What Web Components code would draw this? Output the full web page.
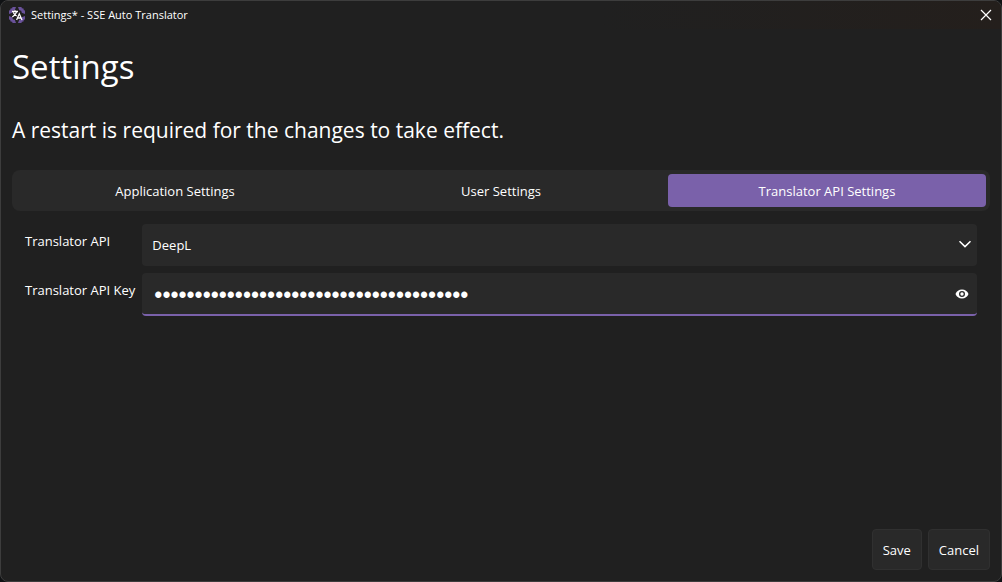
<!DOCTYPE html>
<html lang="en">
<head>
<meta charset="utf-8">
<title>Settings* - SSE Auto Translator</title>
<style>
html, body { height: 100%; }
body { margin: 0; background: #101214; color: #fff; font: 13px/20px "Open Sans", "Noto Sans", sans-serif; }
</style>
</head>
<body>
<settings-window></settings-window>
<script>
const define = (name, html, setup) => customElements.define(name, class extends HTMLElement {
  constructor() {
    super();
    const t = document.createElement('template');
    t.innerHTML = html;
    this.attachShadow({ mode: 'open' }).append(t.content.cloneNode(true));
  }
  connectedCallback() { if (setup) setup(this, this.shadowRoot); }
});

define('title-bar', `
<style>
:host { display: flex; align-items: center; height: 28px; padding: 0 8px; gap: 6px; font-size: 11px; line-height: 16px;
  background: linear-gradient(90deg, #202020 60%, #241f1c); }
.logo { width: 16px; height: 16px; flex: none; }
span { flex: 1; }
button { display: flex; align-items: center; justify-content: center; width: 14px; height: 24px; padding: 0; border: 0; background: none; color: #fff; }
</style>
<svg class="logo" viewBox="0 0 16 16" aria-hidden="true">
  <g fill="#6a529b">
    <path d="M3.500 0H7L5.800 3.200 3.800 3.800 3.200 5.800 0 7V3.500L1.200 3.200 1.500 1.500 3.200 1.200Z"/>
    <path d="M12.500 0H9l1.200 3.200 2 .6.600 2L16 7V3.500l-1.200-.3-.3-1.700-1.700-.3Z"/>
    <path d="M3.500 16H7l-1.200-3.200-2-.6-.6-2L0 9v3.500l1.200.3.300 1.700 1.700.3Z"/>
    <path d="M12.500 16H9l1.200-3.200 2-.6.600-2L16 9v3.500l-1.200.3-.3 1.700-1.700.3Z"/>
  </g>
  <path fill="none" stroke="#fff" stroke-width="1.300" d="M3 4.500h6M6 3.200v1.300M7.700 4.700Q6.800 8 3.300 10M4.300 5.500Q5.500 8 7.700 9M7.600 13l2.700-6.200L13 13M8.600 11h3.500"/>
</svg>
<span><slot></slot></span>
<button type="button" aria-label="Close"><svg width="12" height="12" viewBox="0 0 12 12" fill="none" stroke="currentColor" stroke-width="1.200"><path d="M1 1l10 10M11 1L1 11"/></svg></button>
`);

define('tab-strip', `
<style>
:host { display: grid; grid-auto-flow: column; grid-auto-columns: 1fr; gap: 8px; padding: 4px; background: #292929; border-radius: 8px; }
</style><slot></slot>`, el => el.setAttribute('role', 'tablist'));

define('tab-item', `
<style>
:host { display: grid; }
button { height: 33px; padding: 0; border: 0; border-radius: 4px; background: none; color: inherit; font: inherit; }
:host([selected]) button { background: #7a61aa; }
</style><button type="button" role="tab"><slot></slot></button>`,
(el, root) => root.querySelector('button').setAttribute('aria-selected', el.hasAttribute('selected')));

define('api-form', `
<style>
:host { display: block; }
form { display: grid; grid-template-columns: auto 1fr; column-gap: 7px; row-gap: 7px; }
label { padding-top: 7px; }
.field { display: grid; align-items: center; height: 42px; background: #292929; border-radius: 4px; overflow: hidden; }
.field > * { grid-area: 1 / 1; }
select, input { box-sizing: border-box; width: 100%; height: 100%; margin: 0; border: 0; outline: 0; background: none; color: #fff; font: inherit; appearance: none; }
select { padding: 0 32px 0 10px; }
option { background: #292929; }
.field svg { display: block; }
.chevron { justify-self: end; margin-right: 5px; pointer-events: none; }
.key { height: 41px; border-bottom: 2px solid #7a61aa; }
input { padding: 4px 36px 0 12px; font: 23px/28px "Liberation Sans", Arial, sans-serif; }
button { justify-self: end; margin-right: 8px; padding: 0; border: 0; background: none; color: #fff; }
</style>
<form>
  <label for="api">Translator API</label>
  <div class="field">
    <select id="api"><option>DeepL</option></select>
    <svg class="chevron" width="14" height="14" viewBox="0 0 14 14" fill="none" stroke="#fff" stroke-width="1.500"><path d="M1.500 3.200L7 8.600 12.500 3.200"/></svg>
  </div>
  <label for="key">Translator API Key</label>
  <div class="field key">
    <input id="key" type="password" autocomplete="off" value="000000000000000000000000000000000000000">
    <button type="button" aria-label="Show key"><svg width="14" height="14" viewBox="0 0 14 14"><path fill="#fff" fill-rule="evenodd" d="M7 2.500C10 2.500 12.400 4.200 13.500 7 12.400 9.800 10 11.500 7 11.500S1.600 9.800.5 7C1.600 4.200 4 2.500 7 2.500ZM7 4a3 3 0 1 0 0 6 3 3 0 0 0 0-6Zm0 1.300a1.700 1.700 0 1 1 0 3.400 1.700 1.700 0 0 1 0-3.400Z"/></svg></button>
  </div>
</form>`);

define('push-button', `
<style>
:host { display: block; }
button { height: 41px; padding: 0 10px; border: 1px solid #303030; border-radius: 4px; background: #292929; color: inherit; font: inherit; }
</style><button type="button"><slot></slot></button>`);

define('settings-window', `
<style>
:host { display: flex; flex-direction: column; box-sizing: border-box; min-height: 100vh; border: 1px solid #3d3d3d; border-radius: 8px; background: #202020; overflow: hidden; }
main { display: flex; flex-direction: column; flex: 1; padding: 14px 11px 11px; }
h1, p { margin: 0; font-weight: 400; }
h1 { font-size: 33px; line-height: 48px; }
p { margin-top: 23px; font-size: 21px; line-height: 32px; }
tab-strip { margin-top: 24px; }
api-form { padding: 13px 13px 0; }
footer { display: flex; justify-content: flex-end; gap: 6px; margin-top: auto; }
</style>
<title-bar>Settings* - SSE Auto Translator</title-bar>
<main>
  <h1>Settings</h1>
  <p>A restart is required for the changes to take effect.</p>
  <tab-strip>
    <tab-item>Application Settings</tab-item>
    <tab-item>User Settings</tab-item>
    <tab-item selected>Translator API Settings</tab-item>
  </tab-strip>
  <api-form></api-form>
  <footer><push-button>Save</push-button><push-button>Cancel</push-button></footer>
</main>`);
</script>
</body>
</html>
